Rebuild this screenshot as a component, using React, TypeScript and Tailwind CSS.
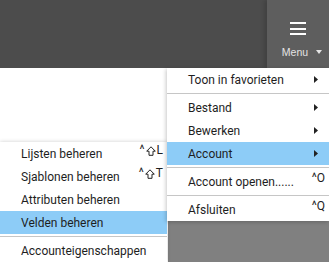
import React from "react";

const Arrow = () => (
  <svg width="4" height="7" viewBox="0 0 4 7" className="shrink-0">
    <path d="M0 0 L4 3.5 L0 7 Z" fill="#222" />
  </svg>
);

const Shift = () => (
  <svg width="10" height="10" viewBox="0 0 10 10" className="mx-[1px] shrink-0">
    <path d="M5 0.8 L9.3 5.2 H7 V9.3 H3 V5.2 H0.7 Z" fill="none" stroke="#222" strokeWidth="1" strokeLinejoin="miter" />
  </svg>
);

type Item = { label: string; arrow?: boolean; shortcut?: string; shift?: boolean; active?: boolean } | "sep";

const mainItems: Item[] = [
  { label: "Toon in favorieten", arrow: true },
  "sep",
  { label: "Bestand", arrow: true },
  { label: "Bewerken", arrow: true },
  { label: "Account", arrow: true, active: true },
  "sep",
  { label: "Account openen......", shortcut: "O" },
  "sep",
  { label: "Afsluiten", shortcut: "Q" },
];

const subItems: Item[] = [
  { label: "Lijsten beheren", shortcut: "L", shift: true },
  { label: "Sjablonen beheren", shortcut: "T", shift: true },
  { label: "Attributen beheren" },
  { label: "Velden beheren", active: true },
  "sep",
  { label: "Accounteigenschappen" },
];

function MenuList({ items }: { items: Item[] }) {
  return (
    <>
      {items.map((it, i) =>
        it === "sep" ? (
          <div key={i} className="h-[5px] flex flex-col justify-center">
            <div className="h-px bg-[#c6c6c6]" />
          </div>
        ) : (
          <div
            key={i}
            className={
              "h-[23px] flex items-center pl-[21px] text-[12px] text-[#1e1e1e] " +
              (it.active ? "bg-[#8dccf7] " : "") +
              (it.arrow ? "pr-[11px]" : "pr-[4px]")
            }
          >
            <span className="flex-1 whitespace-nowrap">{it.label}</span>
            {it.arrow && <Arrow />}
            {it.shortcut && (
              <span className="text-[12px] leading-none -mt-[8px] whitespace-nowrap flex items-end">
                <span className="self-start">^</span>
                {it.shift && <Shift />}
                <span>{it.shortcut}</span>
              </span>
            )}
          </div>
        )
      )}
    </>
  );
}

export default function App() {
  return (
    <div className="relative w-[329px] h-[262px] overflow-hidden bg-white flex flex-col font-['Roboto','Liberation_Sans',sans-serif]">
      <header className="h-[68px] bg-[#4c4c4c] flex justify-end shrink-0">
        <div className="w-[62px] bg-[#5e5e5e] flex flex-col items-center shadow-[-3px_0_4px_rgba(0,0,0,0.15)]">
          <div className="mt-[22px] flex flex-col gap-[3.5px] w-[16px]">
            <div className="h-[2px] bg-white" />
            <div className="h-[2px] bg-white" />
            <div className="h-[2px] bg-white" />
          </div>
          <div className="mt-[12px] ml-[8px] flex items-center gap-[8px] text-[10.5px] text-[#e4e4e4] leading-none font-['Liberation_Sans',sans-serif]">
            <span>Menu</span>
            <svg width="6" height="4" viewBox="0 0 6 4">
              <path d="M0 0 H6 L3 4 Z" fill="#e4e4e4" />
            </svg>
          </div>
        </div>
      </header>

      <div className="flex-1 flex">
        <div className="flex-1 bg-white" />
        <div className="w-[161px] flex flex-col">
          <div className="h-[153px] bg-white" />
          <div className="flex-1 bg-[#808080]" />
        </div>
      </div>

      <div className="absolute left-0 top-[142px] w-[167px] bg-white shadow-[0_0_4px_rgba(0,0,0,0.2)]">
        <MenuList items={subItems} />
      </div>

      <div className="absolute left-[167px] top-[68px] w-[162px] bg-white shadow-[-1px_1px_4px_rgba(0,0,0,0.22)]">
        <MenuList items={mainItems} />
      </div>
    </div>
  );
}
